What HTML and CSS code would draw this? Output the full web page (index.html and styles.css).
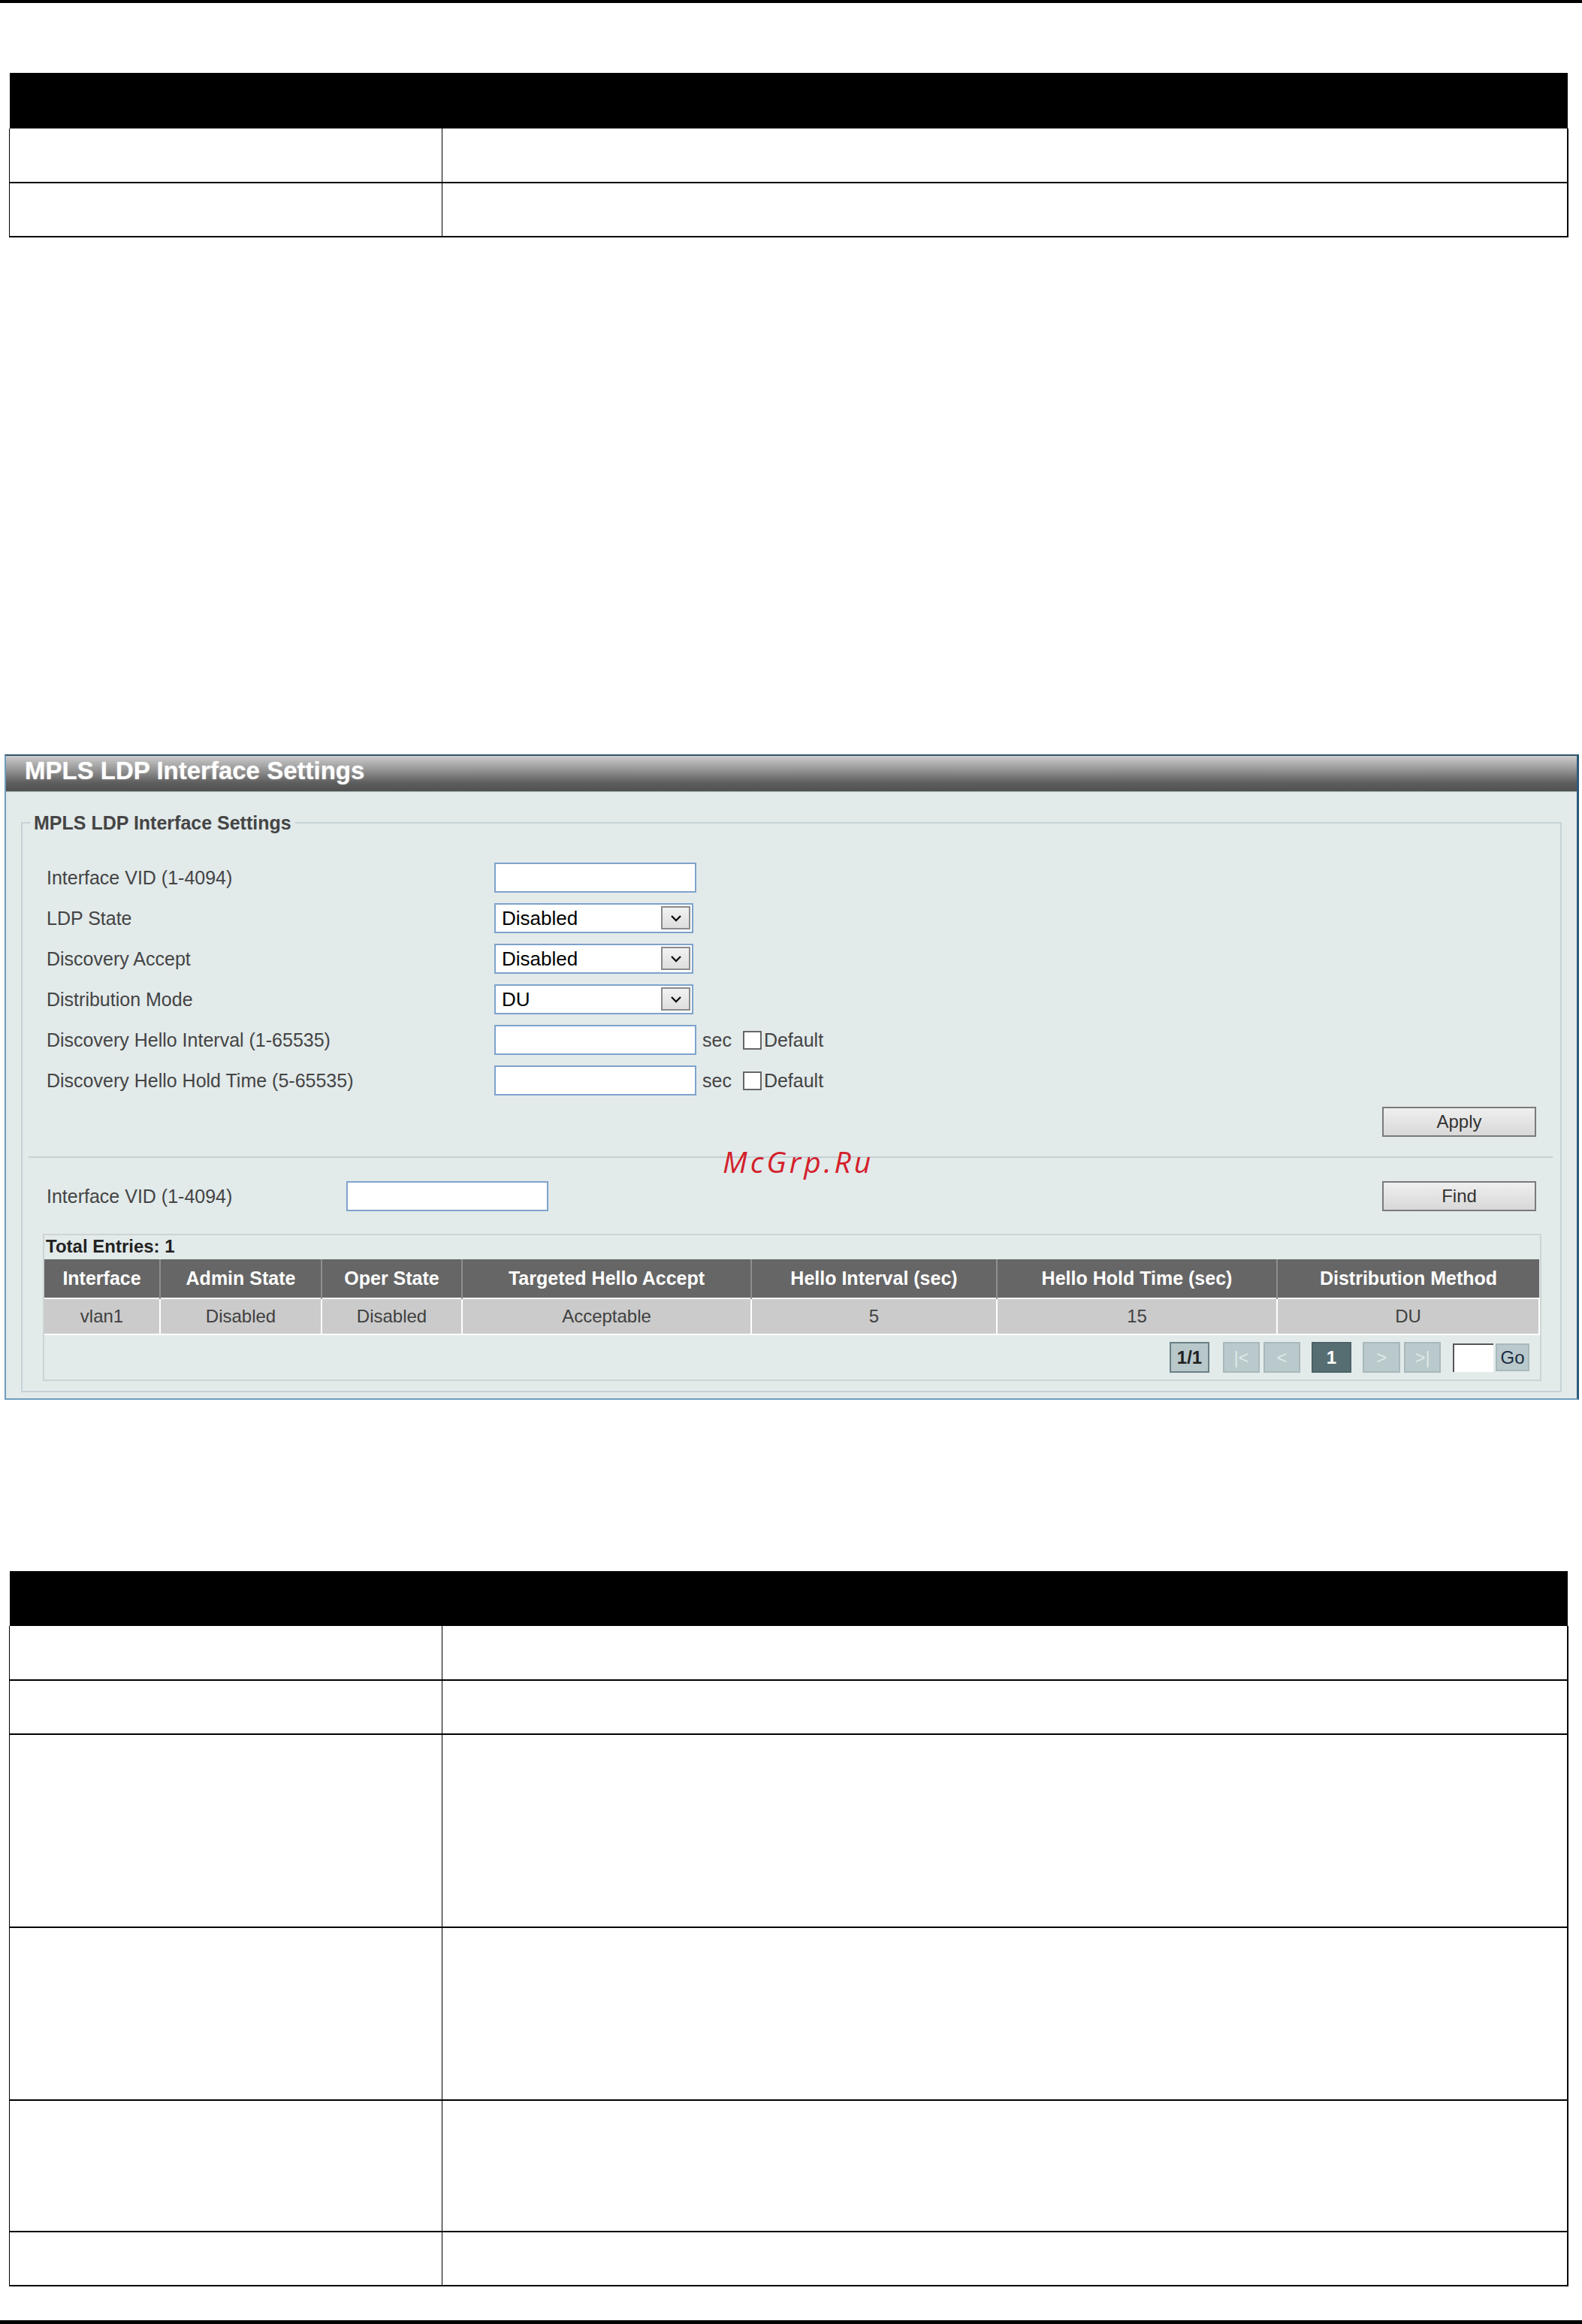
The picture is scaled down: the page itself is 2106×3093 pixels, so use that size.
FILE: index.html
```html
<!DOCTYPE html>
<html lang="en">
<head>
    <meta charset="UTF-8">
    <meta name="viewport" content="width=device-width, initial-scale=1.0">
    <title>MPLS LDP Interface Settings</title>
    <link rel="stylesheet" href="styles.css">
</head>
<body>
<div class="page">
    <table class="spec-table spec-top">
        <thead>
            <tr><th class="col-name"></th><th></th></tr>
        </thead>
        <tbody>
            <tr class="row-line"><td></td><td></td></tr>
            <tr class="row-line"><td></td><td></td></tr>
        </tbody>
    </table>

    <div class="panel">
        <div class="panel-title">MPLS LDP Interface Settings</div>
        <div class="panel-body">
            <fieldset class="settings">
                <legend>MPLS LDP Interface Settings</legend>

                <div class="form-grid">
                    <label for="vid">Interface VID (1-4094)</label>
                    <div class="field"><input type="text" id="vid" class="text-input"></div>

                    <label for="ldp-state">LDP State</label>
                    <div class="field">
                        <div class="select-wrap">
                            <select id="ldp-state" class="select">
                                <option>Disabled</option>
                                <option>Enabled</option>
                            </select>
                            <span class="select-arrow"><svg width="16" height="10" viewBox="0 0 16 10"><path d="M2 2 L8 8 L14 2" fill="none" stroke="#111" stroke-width="2.4"/></svg></span>
                        </div>
                    </div>

                    <label for="disc-accept">Discovery Accept</label>
                    <div class="field">
                        <div class="select-wrap">
                            <select id="disc-accept" class="select">
                                <option>Disabled</option>
                                <option>Enabled</option>
                            </select>
                            <span class="select-arrow"><svg width="16" height="10" viewBox="0 0 16 10"><path d="M2 2 L8 8 L14 2" fill="none" stroke="#111" stroke-width="2.4"/></svg></span>
                        </div>
                    </div>

                    <label for="dist-mode">Distribution Mode</label>
                    <div class="field">
                        <div class="select-wrap">
                            <select id="dist-mode" class="select">
                                <option>DU</option>
                                <option>DoD</option>
                            </select>
                            <span class="select-arrow"><svg width="16" height="10" viewBox="0 0 16 10"><path d="M2 2 L8 8 L14 2" fill="none" stroke="#111" stroke-width="2.4"/></svg></span>
                        </div>
                    </div>

                    <label for="hello-int">Discovery Hello Interval (1-65535)</label>
                    <div class="field">
                        <input type="text" id="hello-int" class="text-input">
                        <span class="unit">sec</span>
                        <input type="checkbox" class="check" id="hello-int-def">
                        <label for="hello-int-def" class="check-label">Default</label>
                    </div>

                    <label for="hello-hold">Discovery Hello Hold Time (5-65535)</label>
                    <div class="field">
                        <input type="text" id="hello-hold" class="text-input">
                        <span class="unit">sec</span>
                        <input type="checkbox" class="check" id="hello-hold-def">
                        <label for="hello-hold-def" class="check-label">Default</label>
                    </div>
                </div>

                <div class="actions"><button class="btn">Apply</button></div>

                <div class="divider"></div>

                <div class="find-row">
                    <label for="find-vid">Interface VID (1-4094)</label>
                    <input type="text" id="find-vid" class="text-input">
                    <button class="btn">Find</button>
                </div>

                <div class="result">
                    <div class="result-head">Total Entries: 1</div>
                    <table class="entries">
                        <thead>
                            <tr>
                                <th class="c-if">Interface</th>
                                <th class="c-admin">Admin State</th>
                                <th class="c-oper">Oper State</th>
                                <th class="c-target">Targeted Hello Accept</th>
                                <th class="c-int">Hello Interval (sec)</th>
                                <th class="c-hold">Hello Hold Time (sec)</th>
                                <th>Distribution Method</th>
                            </tr>
                        </thead>
                        <tbody>
                            <tr>
                                <td>vlan1</td>
                                <td>Disabled</td>
                                <td>Disabled</td>
                                <td>Acceptable</td>
                                <td>5</td>
                                <td>15</td>
                                <td>DU</td>
                            </tr>
                        </tbody>
                    </table>
                    <div class="pager">
                        <span class="pg pg-total">1/1</span>
                        <span class="pg pg-off pg-first">|&lt;</span>
                        <span class="pg pg-off">&lt;</span>
                        <span class="pg pg-cur">1</span>
                        <span class="pg pg-off pg-next">&gt;</span>
                        <span class="pg pg-off">&gt;|</span>
                        <input type="text" class="pg-input">
                        <button class="pg pg-go">Go</button>
                    </div>
                </div>
            </fieldset>
        </div>
        <div class="watermark">McGrp.Ru</div>
    </div>

    <table class="spec-table spec-bottom">
        <thead>
            <tr><th class="col-name"></th><th></th></tr>
        </thead>
        <tbody>
            <tr class="row-line"><td></td><td></td></tr>
            <tr class="row-line"><td></td><td></td></tr>
            <tr class="row-tall"><td></td><td></td></tr>
            <tr class="row-mid"><td></td><td></td></tr>
            <tr class="row-short"><td></td><td></td></tr>
            <tr class="row-line"><td></td><td></td></tr>
        </tbody>
    </table>
</div>
</body>
</html>
```

FILE: styles.css
```css
* {
    box-sizing: border-box;
}
body {
    margin: 0;
    background: #fff;
    font-family: "Liberation Sans", Arial, sans-serif;
    color: #000;
}
.page {
    height: 3093px;
    overflow: hidden;
    border-top: 4px solid #000;
    border-bottom: 5px solid #000;
}

/* document tables (text removed) */
.spec-table {
    border-collapse: collapse;
    table-layout: fixed;
    width: 2076px;
    margin-left: 12px;
}
.spec-table th {
    background: #000;
    height: 74px;
    padding: 0;
}
.spec-table .col-name {
    width: 576px;
}
.spec-table td {
    padding: 0;
    border-left: 1px solid #000;
    border-bottom: 2px solid #000;
}
.spec-table td:last-child {
    border-right: 2px solid #000;
}
.spec-top {
    margin-top: 93px;
}
.spec-bottom {
    margin-top: 228px;
}
.spec-bottom th {
    height: 73px;
}
.row-line td { height: 72px; }
.row-tall td { height: 257px; }
.row-mid td { height: 230px; }
.row-short td { height: 175px; }

/* web UI panel */
.panel {
    position: relative;
    width: 2096px;
    margin: 688px 0 0 6px;
    background: #e2eaea;
    border-left: 2px solid #6e9dbd;
    border-top: 2px solid #2f5269;
    border-right: 3px solid #2f5a7a;
    border-bottom: 2px solid #6e9dbd;
}
.panel-title {
    height: 48px;
    padding-left: 25px;
    line-height: 40px;
    font-size: 33px;
    font-weight: bold;
    color: #fff;
    background: linear-gradient(#cdcdcd, #979797 38%, #5e5e5e 76%, #505050);
    border-bottom: 1px solid #9fb0b3;
    text-shadow: 0 0 2px rgba(255, 255, 255, 0.5);
}
.panel-body {
    padding: 27px 20px 8px 20px;
}
.settings {
    margin: 0;
    padding: 0 0 13px 0;
    min-width: 0;
    border: 2px solid #c6d3d6;
}
.settings legend {
    margin-left: 10px;
    padding: 0 5px;
    font-size: 25px;
    line-height: 28px;
    font-weight: bold;
    color: #454545;
}
label,
.unit {
    font-size: 25px;
    color: #444;
}
.form-grid {
    display: grid;
    grid-template-columns: 596px auto;
    row-gap: 14px;
    align-items: center;
    padding: 39px 32px 0 32px;
}
.field {
    display: flex;
    align-items: center;
    height: 40px;
}
.text-input {
    width: 269px;
    height: 40px;
    margin: 0;
    border: 2px solid #7ea3cc;
    background: #fff;
}
.select-wrap {
    position: relative;
    width: 265px;
    height: 40px;
}
.select {
    width: 100%;
    height: 100%;
    margin: 0;
    padding: 0 0 0 8px;
    border: 2px solid #7ea3cc;
    background: #fff;
    appearance: none;
    font-family: "Liberation Sans", Arial, sans-serif;
    font-size: 26px;
    color: #000;
}
.select-arrow {
    position: absolute;
    top: 4px;
    right: 4px;
    width: 39px;
    height: 31px;
    display: flex;
    align-items: center;
    justify-content: center;
    background: linear-gradient(#f2f2f2, #dedede);
    border: 2px solid #8a8a8a;
    pointer-events: none;
}
.unit {
    margin-left: 8px;
}
.check {
    appearance: none;
    width: 25px;
    height: 25px;
    margin: 0 3px 0 15px;
    border: 2px solid #666;
    background: #fff;
}
.actions {
    display: flex;
    justify-content: flex-end;
    padding: 15px 32px 0 0;
}
.btn {
    width: 205px;
    height: 40px;
    margin: 0;
    border: 2px solid #7a7a7a;
    background: linear-gradient(#efefef, #d8d8d8);
    font-family: "Liberation Sans", Arial, sans-serif;
    font-size: 24px;
    color: #333;
}
.divider {
    margin: 26px 10px 0 8px;
    border-top: 2px solid #c3d0d4;
}
.find-row {
    display: flex;
    align-items: center;
    margin-top: 31px;
    padding: 0 32px;
}
.find-row label {
    width: 399px;
}
.find-row .btn {
    margin-left: auto;
}

/* result table */
.result {
    margin: 30px 25px 0 27px;
    border: 2px solid #cdd4d4;
}
.result-head {
    height: 32px;
    padding-left: 2px;
    line-height: 30px;
    font-size: 24px;
    font-weight: bold;
    color: #222;
}
.entries {
    width: 100%;
    border-collapse: collapse;
    table-layout: fixed;
    font-size: 24px;
}
.entries th {
    height: 52px;
    padding: 0;
    background: #666;
    color: #fff;
    font-size: 25px;
    font-weight: bold;
    border-left: 2px solid #8e8e8e;
}
.entries td {
    height: 48px;
    padding: 0;
    text-align: center;
    background: #cbcbcb;
    color: #404040;
    border: 2px solid #fff;
}
.entries th:first-child,
.entries td:first-child {
    border-left: none;
}
.c-if { width: 154px; }
.c-admin { width: 215px; }
.c-oper { width: 187px; }
.c-target { width: 385px; }
.c-int { width: 327px; }
.c-hold { width: 373px; }
.pager {
    display: flex;
    justify-content: flex-end;
    align-items: center;
    height: 59px;
    padding-right: 14px;
}
.pg {
    display: flex;
    align-items: center;
    justify-content: center;
    width: 49px;
    height: 41px;
    margin-left: 5px;
    font-family: "Liberation Sans", Arial, sans-serif;
    font-size: 24px;
    background: #b9c9cc;
    border: 2px solid #a8b8bb;
    color: #dfe8e8;
}
.pg-total {
    width: 53px;
    margin-left: 0;
    font-weight: bold;
    color: #222;
    border-color: #6b8085;
    background: #b7c7ca;
}
.pg-first {
    margin-left: 18px;
}
.pg-cur {
    width: 53px;
    margin-left: 15px;
    font-weight: bold;
    color: #fff;
    background: #566e72;
    border-color: #4c6266;
}
.pg-next {
    margin-left: 15px;
    width: 50px;
}
.pg-input {
    width: 54px;
    height: 38px;
    margin: 0 0 0 16px;
    border: none;
    border-top: 2px solid #555;
    border-left: 2px solid #555;
    background: #fff;
}
.pg-go {
    width: 45px;
    height: 37px;
    margin-left: 3px;
    padding: 0;
    color: #1a2a40;
}

.watermark {
    position: absolute;
    left: 954px;
    top: 513px;
    font-family: "Open Sans", "DejaVu Sans", sans-serif;
    font-style: italic;
    font-size: 39px;
    letter-spacing: 4px;
    color: #d4202a;
}
```
